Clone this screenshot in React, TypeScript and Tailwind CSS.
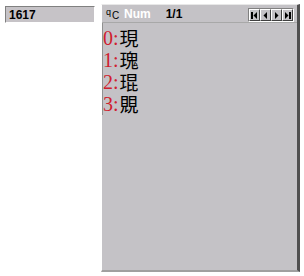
import React from 'react'

const rows = [
  { n: '0', c: '現' },
  { n: '1', c: '瑰' },
  { n: '2', c: '琨' },
  { n: '3', c: '覞' },
]

function NavButton({ kind }: { kind: 'first' | 'prev' | 'next' | 'last' }) {
  return (
    <div className="flex h-[12px] w-[11px] items-center justify-center border-t border-l border-t-white border-l-white border-r border-b border-r-[#404040] border-b-[#404040] bg-[#c4c2c6]">
      <svg width="7" height="7" viewBox="0 0 7 7">
        {kind === 'first' && (
          <>
            <rect x="0" y="0" width="2" height="7" fill="#000" />
            <polygon points="6,0 6,7 2.5,3.5" fill="#000" />
          </>
        )}
        {kind === 'prev' && <polygon points="5,0 5,7 1.5,3.5" fill="#000" />}
        {kind === 'next' && <polygon points="2,0 2,7 5.5,3.5" fill="#000" />}
        {kind === 'last' && (
          <>
            <polygon points="1,0 1,7 4.5,3.5" fill="#000" />
            <rect x="5" y="0" width="2" height="7" fill="#000" />
          </>
        )}
      </svg>
    </div>
  )
}

export default function App() {
  return (
    <div className="flex h-[276px] w-[304px] items-start bg-white">
      <div className="ml-[5px] mt-[6px] flex h-[17px] w-[90px] items-center border-t border-l border-t-[#808080] border-l-[#808080] border-r border-b border-r-white border-b-white bg-[#c6c3c7] pl-[3px] font-['Liberation_Sans',sans-serif] text-[12px] font-bold text-black">
        1617
      </div>

      <div className="ml-[6px] mt-[4px] flex h-[268px] w-[199px] flex-col border-t border-l border-t-[#e8e8e8] border-l-white border-r-[3px] border-b-[2px] border-r-[#505050] border-b-[#a0a0a0] bg-[#c4c2c6]">
        <div className="flex h-[18px] items-center border-b border-b-[#a8a8a8] pl-[4px] pr-[2px]">
          <span className="relative flex h-[12px] w-[14px] font-['Liberation_Sans',sans-serif] text-[9px] leading-none text-black">
            <span className="absolute left-0 top-0">q</span>
            <span className="absolute left-[6px] top-[3px] text-[10px]">C</span>
          </span>
          <span className="ml-[4px] font-['Liberation_Sans',sans-serif] text-[12px] font-bold text-white">Num</span>
          <span className="ml-[15px] font-['Liberation_Sans',sans-serif] text-[12px] font-bold text-black">1/1</span>
          <div className="ml-auto mr-[1px] mt-[3px] flex border border-t-[#808080] border-l-[#808080] border-r-white border-b-white">
            <NavButton kind="first" />
            <NavButton kind="prev" />
            <NavButton kind="next" />
            <NavButton kind="last" />
          </div>
        </div>

        <div className="flex flex-col border-l border-l-[#909090] pt-[4px]">
          {rows.map((r) => (
            <div key={r.n} className="flex h-[22px] items-center">
              <span className="font-['Liberation_Serif',serif] text-[20px] leading-[22px] text-[#d0202e]">
                {r.n}:
              </span>
              <span className="ml-[1px] font-['Noto_Sans_CJK_TC','Noto_Sans_CJK_SC',sans-serif] text-[19px] leading-[22px] text-black">
                {r.c}
              </span>
            </div>
          ))}
        </div>
      </div>
    </div>
  )
}
